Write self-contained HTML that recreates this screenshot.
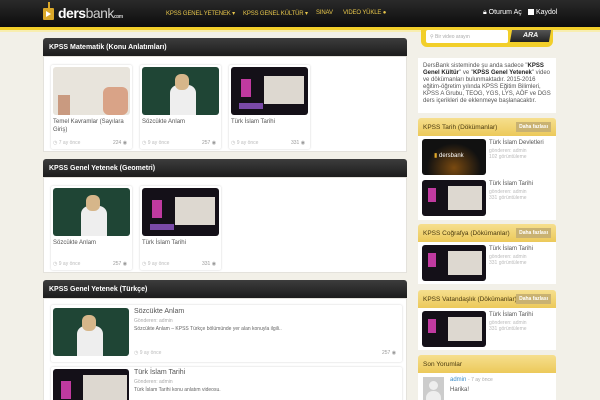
<!DOCTYPE html>
<html><head><meta charset="utf-8">
<style>
*{margin:0;padding:0;box-sizing:border-box}
html,body{width:600px;height:400px;overflow:hidden}
body{background:#f2f0e8;font-family:"Liberation Sans",sans-serif;position:relative}
.a{position:absolute}
.hdr{left:0;top:0;width:600px;height:27px;background:linear-gradient(#2a2a2a,#0c0c0c)}
.yl{left:0;top:27px;width:600px;height:3px;background:#f2cf2a}
.yl2{left:0;top:30px;width:600px;height:2px;background:#f8eeb0}
.nav{top:10px;font-size:6px;letter-spacing:-.15px;color:#e6c54a;white-space:nowrap}
.ph{height:18px;background:linear-gradient(#3d3d3d,#1c1c1c);border-radius:3px 3px 0 0;color:#fff;font-size:7px;font-weight:bold;padding:6px 6px}
.pb{background:#fff;border:1px solid #e4e2dc}
.card{background:#fff;box-shadow:0 0 2px rgba(0,0,0,.18);border-radius:2px}
.th{border-radius:3px;overflow:hidden}
.ct{font-size:6px;color:#555;line-height:8px}
.meta{font-size:5px;color:#bbb}
.yh{height:18px;background:linear-gradient(#f6df8e,#ecc95a);border-radius:3px 3px 0 0;font-size:6.5px;color:#4a3a10;padding:6px 5px;white-space:nowrap}
.btn{position:absolute;right:5px;top:4px;background:#c9b272;color:#fff;font-size:5px;font-weight:bold;padding:2px 3px}
.g{background:#1f4535}
.p{background:#141018}
</style></head><body>
<div class="a hdr"></div>
<div class="a yl"></div><div class="a yl2"></div>
<div class="a" style="left:43px;top:8px;width:11px;height:12px;background:#d9a72a;border-radius:1px"></div>
<div class="a" style="left:48px;top:2px;width:2px;height:7px;background:#d9a72a"></div>
<div class="a" style="left:46px;top:11px;width:0;height:0;border-left:5px solid #fff;border-top:3px solid transparent;border-bottom:3px solid transparent"></div>
<div class="a" style="left:58px;top:5px;font-size:14px;color:#fff;font-weight:bold;letter-spacing:-.5px">ders<span style="font-weight:normal;color:#ccc">bank</span><span style="font-size:5px;color:#ccc">com</span></div>
<div class="a nav" style="left:166px">KPSS GENEL YETENEK ▾</div>
<div class="a nav" style="left:243px">KPSS GENEL KÜLTÜR ▾</div>
<div class="a nav" style="left:316px">SINAV</div>
<div class="a nav" style="left:343px">VIDEO YÜKLE ●</div>
<div class="a" style="left:483px;top:9px;font-size:7px;color:#fff">🔒︎ Oturum Aç</div>
<div class="a" style="left:528px;top:9px;font-size:7px;color:#fff"><span style="display:inline-block;width:6px;height:6px;background:#fff;vertical-align:-1px"></span> Kaydol</div>
<div class="a" style="left:421px;top:28px;width:132px;height:19px;background:#f2cf2a;border-radius:0 0 6px 6px"></div>
<div class="a" style="left:426px;top:30px;width:82px;height:13px;background:#fff;border-radius:2px;font-size:5px;color:#aaa;padding:4px 4px">⚲ Bir video arayın</div>
<div class="a" style="left:511px;top:30px;width:39px;height:12px;background:linear-gradient(#555,#222);color:#fff;font-size:7px;font-weight:bold;text-align:center;padding-top:2px;transform:skewX(-10deg)">ARA</div>

<div class="a ph" style="left:43px;top:38px;width:364px">KPSS Matematik (Konu Anlatımları)</div>
<div class="a pb" style="left:43px;top:56px;width:364px;height:96px"></div>
<div class="a card" style="left:51px;top:65px;width:81px;height:84px"></div>
<div class="a card" style="left:140px;top:65px;width:81px;height:84px"></div>
<div class="a card" style="left:229px;top:65px;width:81px;height:84px"></div>
<div class="a th" style="left:53px;top:67px;width:77px;height:48px;background:#e8e4dc"><div class="a" style="left:50px;top:20px;width:25px;height:28px;background:#d9a387;border-radius:6px"></div><div class="a" style="left:5px;top:28px;width:12px;height:20px;background:#c99a80"></div></div>
<div class="a th g" style="left:142px;top:67px;width:77px;height:48px"><div class="a" style="left:28px;top:18px;width:26px;height:30px;background:#eee;border-radius:8px 8px 0 0"></div><div class="a" style="left:33px;top:7px;width:14px;height:16px;background:#d6b68a;border-radius:6px"></div></div>
<div class="a th p" style="left:231px;top:67px;width:77px;height:48px"><div class="a" style="left:33px;top:9px;width:40px;height:28px;background:#ddd8d0"></div><div class="a" style="left:10px;top:12px;width:10px;height:18px;background:#c03aa0"></div><div class="a" style="left:8px;top:36px;width:24px;height:6px;background:#7a4aa8"></div></div>
<div class="a ct" style="left:53px;top:118px;width:74px">Temel Kavramlar (Sayılara Giriş)</div>
<div class="a ct" style="left:142px;top:118px">Sözcükte Anlam</div>
<div class="a ct" style="left:231px;top:118px">Türk İslam Tarihi</div>
<div class="a meta" style="left:53px;top:140px">◷ 7 ay önce</div><div class="a meta" style="left:113px;top:140px;color:#999">224 ◉</div>
<div class="a meta" style="left:142px;top:140px">◷ 9 ay önce</div><div class="a meta" style="left:202px;top:140px;color:#999">257 ◉</div>
<div class="a meta" style="left:231px;top:140px">◷ 9 ay önce</div><div class="a meta" style="left:291px;top:140px;color:#999">331 ◉</div>

<div class="a ph" style="left:43px;top:159px;width:364px">KPSS Genel Yetenek (Geometri)</div>
<div class="a pb" style="left:43px;top:177px;width:364px;height:96px"></div>
<div class="a card" style="left:51px;top:186px;width:81px;height:84px"></div>
<div class="a card" style="left:140px;top:186px;width:81px;height:84px"></div>
<div class="a th g" style="left:53px;top:188px;width:77px;height:48px"><div class="a" style="left:28px;top:18px;width:26px;height:30px;background:#eee;border-radius:8px 8px 0 0"></div><div class="a" style="left:33px;top:7px;width:14px;height:16px;background:#d6b68a;border-radius:6px"></div></div>
<div class="a th p" style="left:142px;top:188px;width:77px;height:48px"><div class="a" style="left:33px;top:9px;width:40px;height:28px;background:#ddd8d0"></div><div class="a" style="left:10px;top:12px;width:10px;height:18px;background:#c03aa0"></div><div class="a" style="left:8px;top:36px;width:24px;height:6px;background:#7a4aa8"></div></div>
<div class="a ct" style="left:53px;top:239px">Sözcükte Anlam</div>
<div class="a ct" style="left:142px;top:239px">Türk İslam Tarihi</div>
<div class="a meta" style="left:53px;top:261px">◷ 9 ay önce</div><div class="a meta" style="left:113px;top:261px;color:#999">257 ◉</div>
<div class="a meta" style="left:142px;top:261px">◷ 9 ay önce</div><div class="a meta" style="left:202px;top:261px;color:#999">331 ◉</div>

<div class="a ph" style="left:43px;top:280px;width:364px">KPSS Genel Yetenek (Türkçe)</div>
<div class="a pb" style="left:43px;top:298px;width:364px;height:110px"></div>
<div class="a card" style="left:51px;top:305px;width:351px;height:57px"></div>
<div class="a card" style="left:51px;top:367px;width:351px;height:40px"></div>
<div class="a th g" style="left:53px;top:308px;width:76px;height:48px"><div class="a" style="left:24px;top:18px;width:26px;height:30px;background:#eee;border-radius:8px 8px 0 0"></div><div class="a" style="left:29px;top:7px;width:14px;height:16px;background:#d6b68a;border-radius:6px"></div></div>
<div class="a th p" style="left:53px;top:369px;width:76px;height:40px"><div class="a" style="left:30px;top:6px;width:44px;height:34px;background:#ddd8d0"></div><div class="a" style="left:8px;top:12px;width:10px;height:18px;background:#c03aa0"></div></div>
<div class="a" style="left:134px;top:308px;font-size:7px;color:#555">Sözcükte Anlam</div>
<div class="a meta" style="left:134px;top:318px;color:#aaa">Gönderen: admin</div>
<div class="a" style="left:134px;top:326px;font-size:5px;color:#666">Sözcükte Anlam – KPSS Türkçe bölümünde yer alan konuyla ilgili..</div>
<div class="a meta" style="left:134px;top:350px">◷ 9 ay önce</div><div class="a meta" style="left:382px;top:350px;color:#999">257 ◉</div>
<div class="a" style="left:134px;top:369px;font-size:7px;color:#555">Türk İslam Tarihi</div>
<div class="a meta" style="left:134px;top:379px;color:#aaa">Gönderen: admin</div>
<div class="a" style="left:134px;top:387px;font-size:5px;color:#666">Türk İslam Tarihi konu anlatım videosu.</div>

<div class="a" style="left:418px;top:58px;width:138px;height:55px;background:#fff;font-size:6px;color:#555;line-height:7px;padding:5px 5px">DersBank sisteminde şu anda sadece "<b style="color:#222">KPSS Genel Kültür</b>" ve "<b style="color:#222">KPSS Genel Yetenek</b>" video ve dökümanları bulunmaktadır. 2015-2016 eğitim-öğretim yılında KPSS Eğitim Bilimleri, KPSS A Grubu, TEOG, YGS, LYS, AÖF ve DGS ders içerikleri de eklenmeye başlanacaktır.</div>

<div class="a yh" style="left:418px;top:118px;width:138px">KPSS Tarih (Dökümanlar)<span class="btn">Daha fazlası</span></div>
<div class="a" style="left:418px;top:136px;width:138px;height:84px;background:#fff"></div>
<div class="a th" style="left:422px;top:139px;width:64px;height:36px;background:radial-gradient(ellipse at 50% 80%,#7a4a10,#111 60%)"><div class="a" style="left:12px;top:13px;font-size:6px;color:#fff"><span style="color:#e0a82a">▮</span> dersbank</div></div>
<div class="a th p" style="left:422px;top:180px;width:64px;height:36px"><div class="a" style="left:26px;top:6px;width:34px;height:24px;background:#ddd8d0"></div><div class="a" style="left:6px;top:8px;width:8px;height:14px;background:#c03aa0"></div></div>
<div class="a" style="left:489px;top:140px;font-size:6px;color:#555">Türk İslam Devletleri</div>
<div class="a meta" style="left:489px;top:148px">gönderen: admin<br>102 görüntüleme</div>
<div class="a" style="left:489px;top:181px;font-size:6px;color:#555">Türk İslam Tarihi</div>
<div class="a meta" style="left:489px;top:189px">gönderen: admin<br>331 görüntüleme</div>

<div class="a yh" style="left:418px;top:224px;width:138px">KPSS Coğrafya (Dökümanlar)<span class="btn">Daha fazlası</span></div>
<div class="a" style="left:418px;top:242px;width:138px;height:42px;background:#fff"></div>
<div class="a th p" style="left:422px;top:245px;width:64px;height:36px"><div class="a" style="left:26px;top:6px;width:34px;height:24px;background:#ddd8d0"></div><div class="a" style="left:6px;top:8px;width:8px;height:14px;background:#c03aa0"></div></div>
<div class="a" style="left:489px;top:246px;font-size:6px;color:#555">Türk İslam Tarihi</div>
<div class="a meta" style="left:489px;top:254px">gönderen: admin<br>331 görüntüleme</div>

<div class="a yh" style="left:418px;top:290px;width:138px">KPSS Vatandaşlık (Dökümanlar)<span class="btn">Daha fazlası</span></div>
<div class="a" style="left:418px;top:308px;width:138px;height:42px;background:#fff"></div>
<div class="a th p" style="left:422px;top:311px;width:64px;height:36px"><div class="a" style="left:26px;top:6px;width:34px;height:24px;background:#ddd8d0"></div><div class="a" style="left:6px;top:8px;width:8px;height:14px;background:#c03aa0"></div></div>
<div class="a" style="left:489px;top:312px;font-size:6px;color:#555">Türk İslam Tarihi</div>
<div class="a meta" style="left:489px;top:320px">gönderen: admin<br>331 görüntüleme</div>

<div class="a yh" style="left:418px;top:355px;width:138px">Son Yorumlar</div>
<div class="a" style="left:418px;top:373px;width:138px;height:30px;background:#fff"></div>
<div class="a" style="left:423px;top:377px;width:21px;height:23px;background:#ccc"><div class="a" style="left:6px;top:4px;width:9px;height:9px;border-radius:50%;background:#eee"></div><div class="a" style="left:3px;top:14px;width:15px;height:9px;border-radius:7px 7px 0 0;background:#eee"></div></div>
<div class="a" style="left:450px;top:377px;font-size:6px;color:#3a8cc8">admin <span style="color:#aaa;font-size:5px">- 7 ay önce</span></div>
<div class="a" style="left:450px;top:387px;font-size:6px;color:#555">Harika!</div>
</body></html>
